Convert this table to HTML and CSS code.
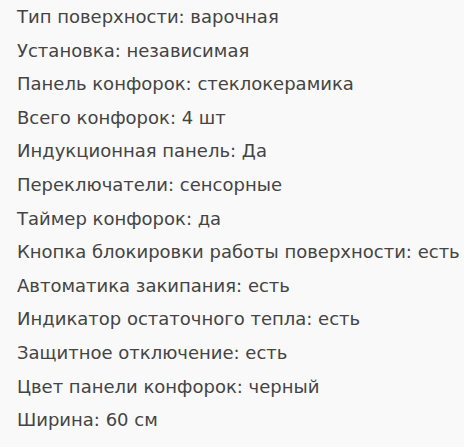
FILE: index.html
```html
<!DOCTYPE html>
<html lang="ru">
<head>
<meta charset="utf-8">
<link rel="stylesheet" href="styles.css">
</head>
<body>
<ul class="specs">
<li>Тип поверхности: варочная</li>
<li>Установка: независимая</li>
<li>Панель конфорок: стеклокерамика</li>
<li>Всего конфорок: 4 шт</li>
<li>Индукционная панель: Да</li>
<li>Переключатели: сенсорные</li>
<li>Таймер конфорок: да</li>
<li>Кнопка блокировки работы поверхности: есть</li>
<li>Автоматика закипания: есть</li>
<li>Индикатор остаточного тепла: есть</li>
<li>Защитное отключение: есть</li>
<li>Цвет панели конфорок: черный</li>
<li>Ширина: 60 см</li>
</ul>
</body>
</html>
```
FILE: styles.css
```css
html, body {
  margin: 0;
  padding: 0;
  background: #f9f9f9;
}
.specs {
  list-style: none;
  margin: 0;
  padding: 0 0 0 17px;
  font-family: "DejaVu Sans", sans-serif;
  font-size: 18px;
  line-height: 33.6px;
  color: #444444;
  white-space: nowrap;
}
.specs li {
  margin: 0;
}
```
